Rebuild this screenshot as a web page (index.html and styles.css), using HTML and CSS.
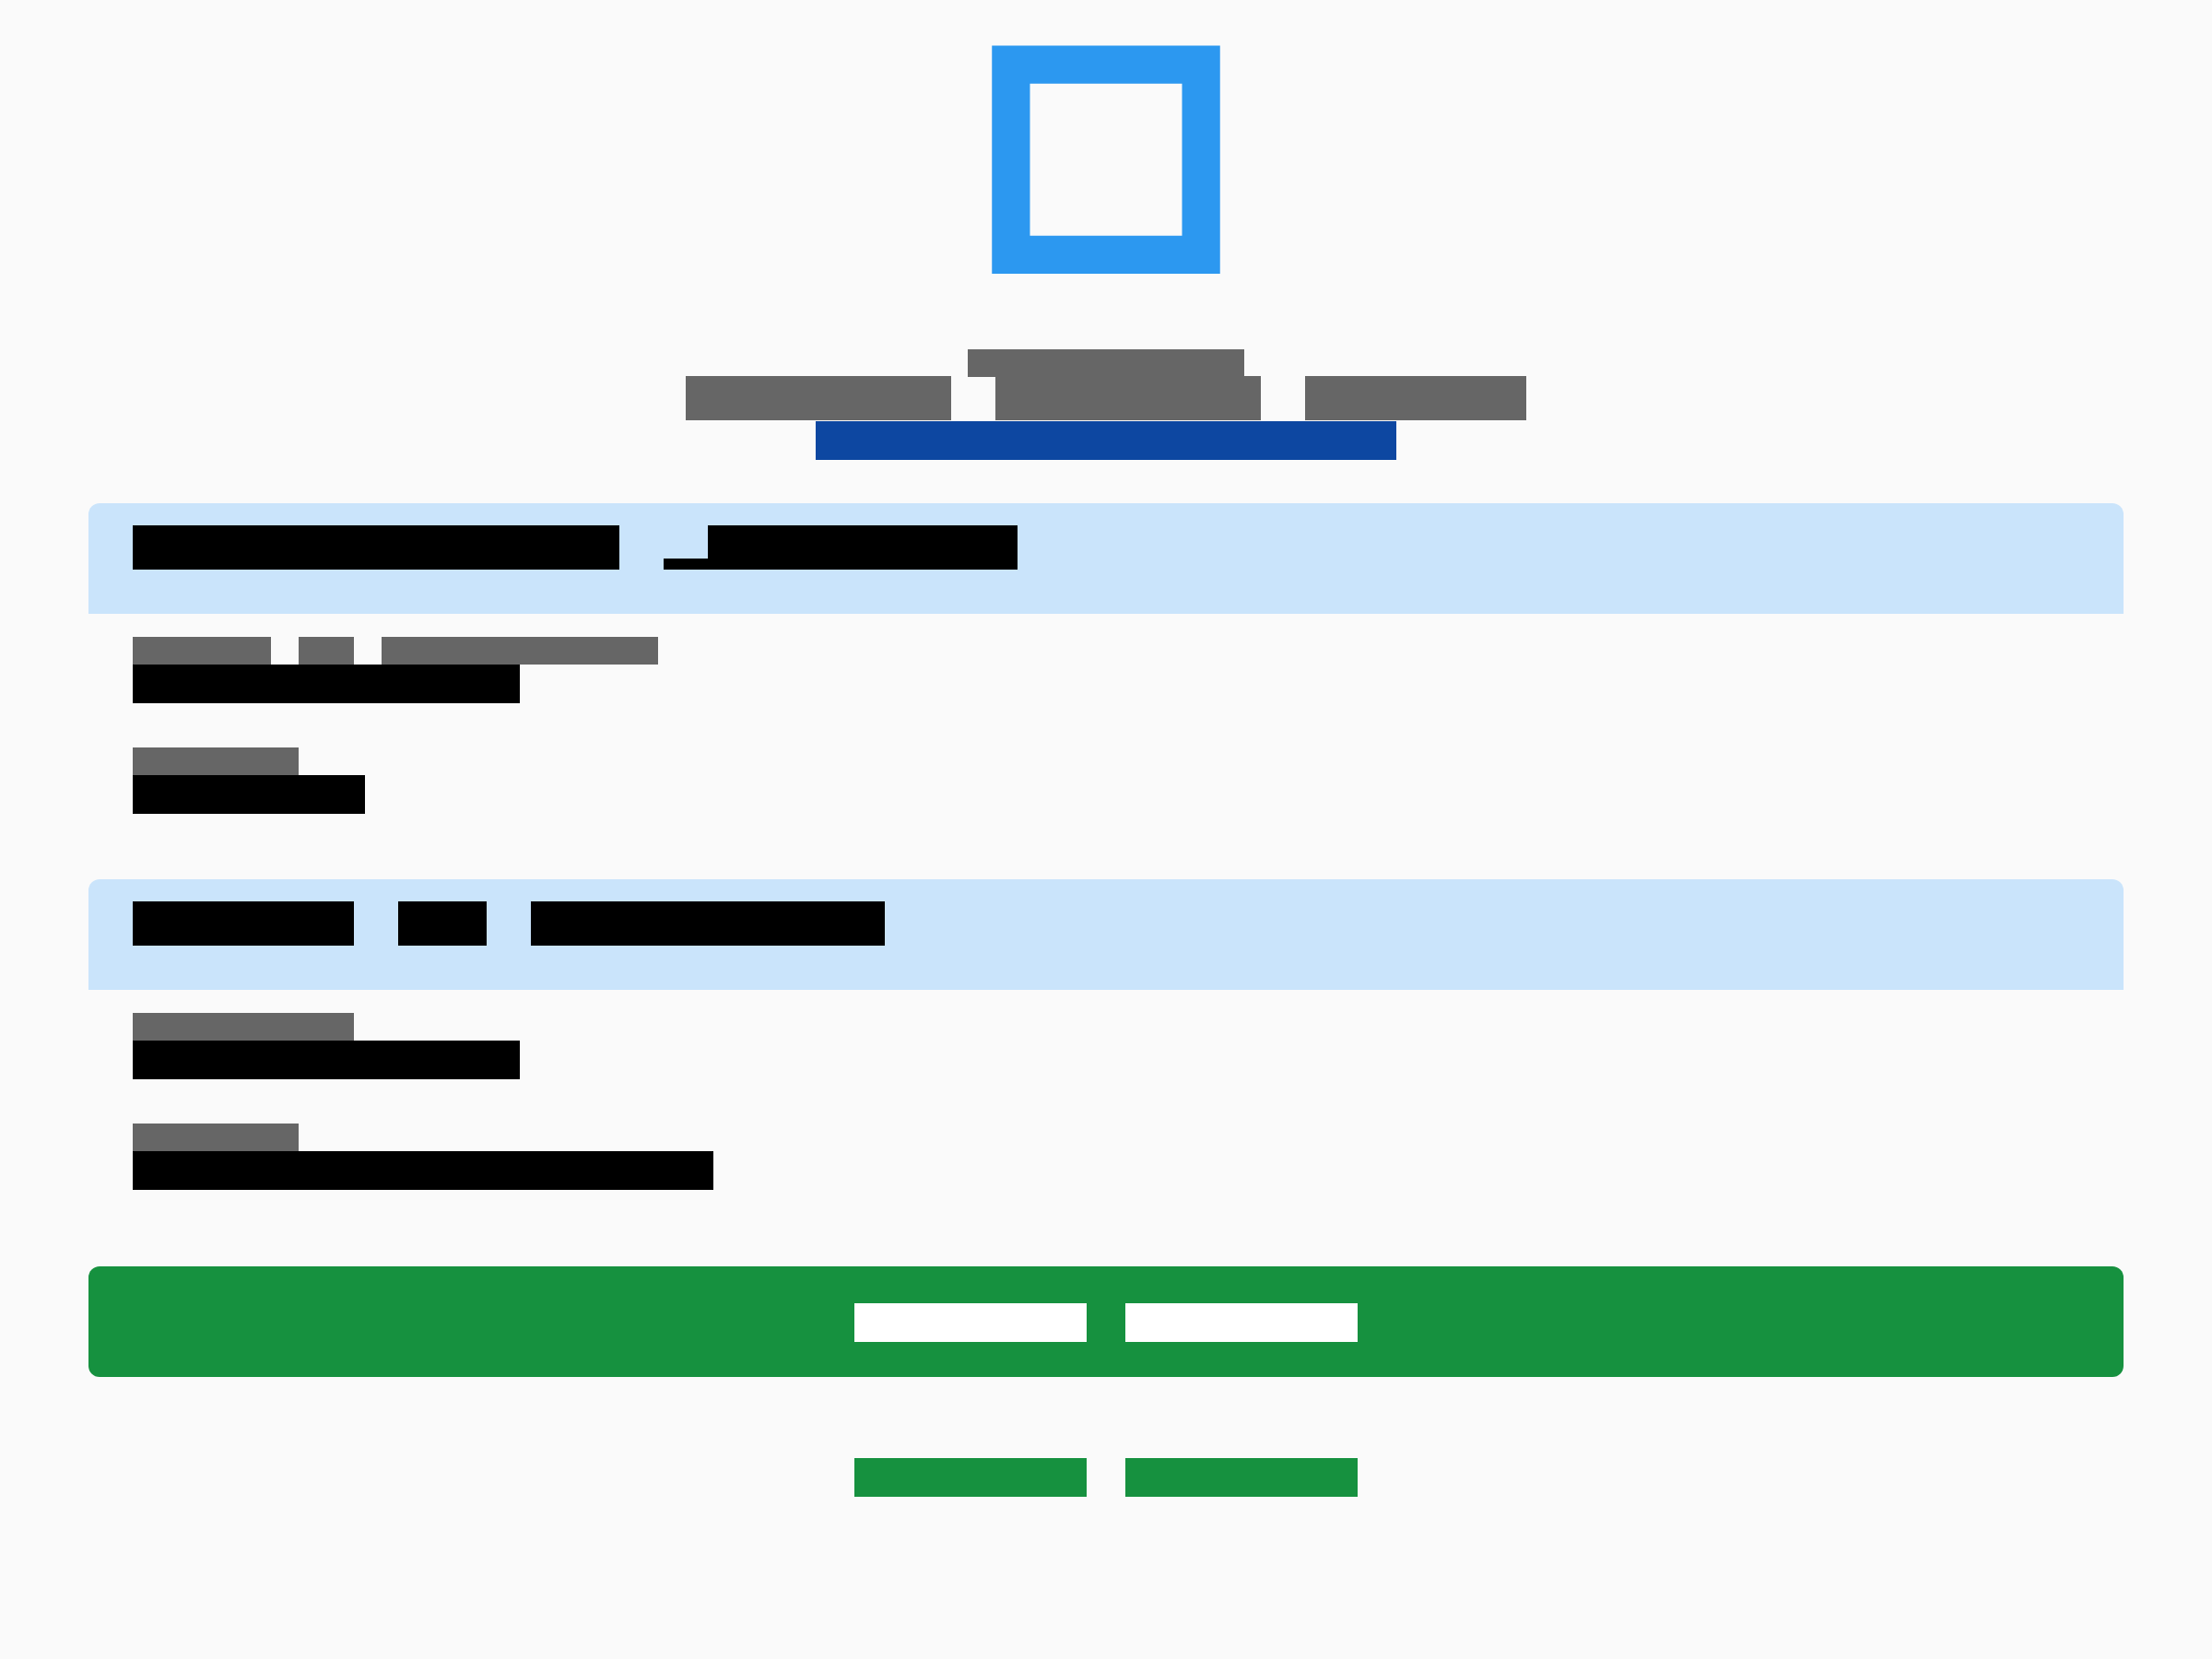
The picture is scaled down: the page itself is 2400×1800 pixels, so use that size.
FILE: index.html
```html
<!DOCTYPE html>
<html lang="en">
<head>
  <meta charset="utf-8">
  <title>Summary</title>
  <link rel="stylesheet" href="styles.css">
</head>
<body>
  <main class="page">
    <header class="intro">
      <svg class="logo" viewBox="0 0 330 330" aria-hidden="true">
        <path fill-rule="evenodd" d="M41.25 41.5h247.5V289H41.25zM82.5 82.75v165h165v-165z"/>
      </svg>
      <div class="line small muted overlap"><span class="word w10"></span></div>
      <div class="line large muted"><span class="word w6"></span><span class="word w6"></span><span class="word w5"></span></div>
      <div class="line medium accent"><span class="word w15"></span></div>
    </header>

    <section class="card">
      <h2 class="card-title line large"><span class="word w11"></span><span class="word-group"><span class="descender"></span><span class="word w7"></span></span></h2>
      <dl class="fields">
        <div class="field">
          <dt class="line small muted"><span class="word w5"></span><span class="word w2"></span><span class="word w10"></span></dt>
          <dd class="line medium"><span class="word w10"></span></dd>
        </div>
        <div class="field">
          <dt class="line small muted"><span class="word w6"></span></dt>
          <dd class="line medium"><span class="word w6"></span></dd>
        </div>
      </dl>
    </section>

    <section class="card">
      <h2 class="card-title line large"><span class="word w5"></span><span class="word w2"></span><span class="word w8"></span></h2>
      <dl class="fields">
        <div class="field">
          <dt class="line small muted"><span class="word w8"></span></dt>
          <dd class="line medium"><span class="word w10"></span></dd>
        </div>
        <div class="field">
          <dt class="line small muted"><span class="word w6"></span></dt>
          <dd class="line medium"><span class="word w15"></span></dd>
        </div>
      </dl>
    </section>

    <div class="actions">
      <button type="button" class="button primary line medium"><span class="word w6"></span><span class="word w6"></span></button>
      <button type="button" class="button flat line medium"><span class="word w6"></span><span class="word w6"></span></button>
    </div>
  </main>
</body>
</html>
```

FILE: styles.css
```css
* {
  box-sizing: border-box;
}

body {
  margin: 0;
  background: #fafafa;
  color: #000;
  font-family: Roboto, sans-serif;
}

.page {
  padding: 8px 96px;
}

/* Lines of block words: every word is measured in em of its line */
.line {
  display: flex;
  gap: 1em;
  margin: 0;
  line-height: 1;
}

.small { font-size: 30px; }
.medium { font-size: 42px; }
.large { font-size: 48px; }

.muted { color: #666; }
.accent { color: #0d47a1; }

.word {
  height: 1em;
  background: currentColor;
}

.w2 { width: 2em; }
.w5 { width: 5em; }
.w6 { width: 6em; }
.w7 { width: 7em; }
.w8 { width: 8em; }
.w10 { width: 10em; }
.w11 { width: 11em; }
.w15 { width: 15em; }

.word-group {
  display: flex;
  align-items: flex-end;
}

.descender {
  width: 1em;
  height: 12px;
  background: currentColor;
}

.intro {
  display: flex;
  flex-direction: column;
  align-items: center;
  margin-bottom: 47px;
}

.logo {
  width: 330px;
  height: 330px;
  margin-bottom: 41px;
  fill: #2c98f0;
}

.overlap {
  margin-bottom: -1px;
}

.intro .accent {
  margin-top: 1px;
}

.card {
  margin-bottom: 71px;
}

.card-title {
  padding: 24px 48px 48px;
  border-radius: 12px 12px 0 0;
  background: #cae4fb;
}

.fields {
  display: flex;
  flex-direction: column;
  gap: 48px;
  margin: 0;
  padding: 25px 48px 0;
}

.actions {
  display: flex;
  flex-direction: column;
  gap: 48px;
  padding-top: 12px;
}

.button {
  justify-content: center;
  width: 100%;
  padding: 40px 48px 38px;
  border: 0;
  border-radius: 12px;
  font-family: inherit;
  cursor: pointer;
}

.primary {
  background: #16913f;
  color: #fff;
}

.flat {
  background: transparent;
  color: #16913f;
}
```
